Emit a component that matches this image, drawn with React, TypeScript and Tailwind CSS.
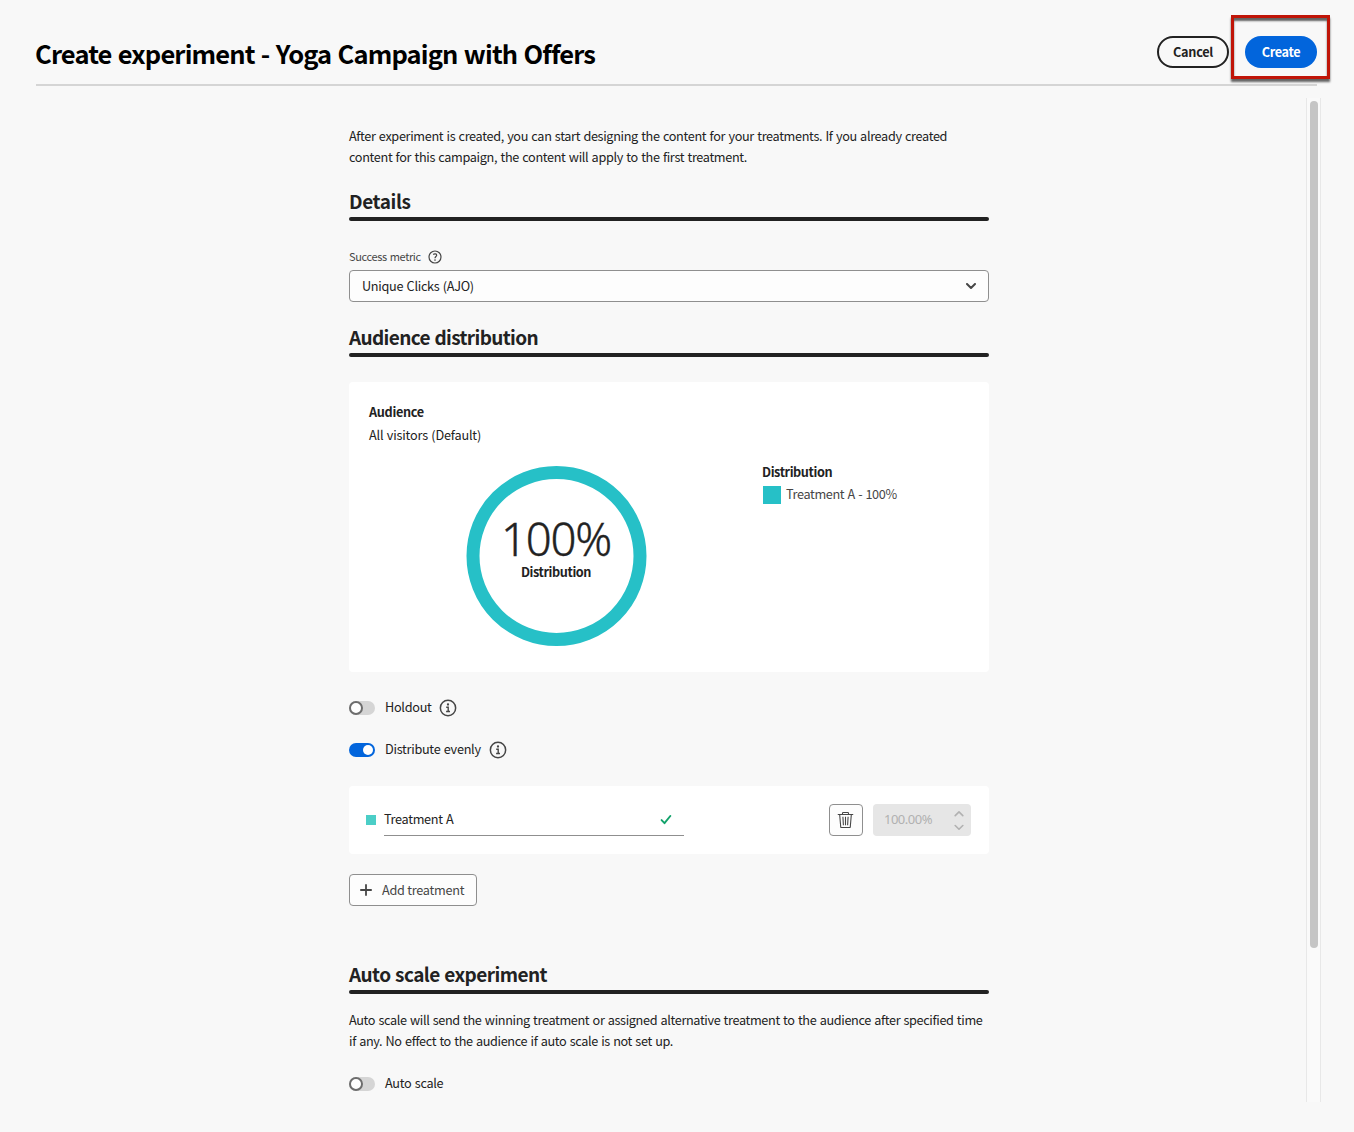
import type { ReactNode } from "react";

function SectionHeading({ children, className }: { children: ReactNode; className: string }) {
  return (
    <div className={className}>
      <h2 className="h-[29px] text-[19px] leading-[25px] font-bold whitespace-nowrap">{children}</h2>
      <div className="h-1 rounded-full bg-[#222]" />
    </div>
  );
}

function Toggle({ on = false }: { on?: boolean }) {
  return on ? (
    <span className="flex h-3.5 w-[26px] items-center justify-end rounded-full bg-[#0265dc] p-0.5">
      <span className="h-2.5 w-2.5 rounded-full bg-white" />
    </span>
  ) : (
    <span className="flex h-3.5 w-[26px] rounded-full bg-[#d5d5d5]">
      <span className="h-3.5 w-3.5 rounded-full border-2 border-[#6d6d6d] bg-white" />
    </span>
  );
}

function InfoIcon() {
  return (
    <svg width="18" height="18" viewBox="0 0 18 18" className="ml-2" fill="none" stroke="#464646">
      <circle cx="9" cy="9" r="7.65" strokeWidth="1.5" />
      <circle cx="9" cy="5.5" r="1.15" fill="#464646" stroke="none" />
      <path d="M7.2 8.3H9.2V12.4M7.1 12.5H11" strokeWidth="1.4" />
    </svg>
  );
}

function HelpIcon() {
  return (
    <svg width="14" height="14" viewBox="0 0 14 14" className="ml-[7px]" fill="none" stroke="#464646">
      <circle cx="7" cy="7" r="6" strokeWidth="1.2" />
      <path d="M5.2 4.5C6.3 3.5 8.8 3.6 8.7 5.3C8.6 6.5 7 6.7 7 8.2" strokeWidth="1.2" />
      <circle cx="7" cy="10.1" r="0.8" fill="#464646" stroke="none" />
    </svg>
  );
}

function TrashIcon() {
  return (
    <svg width="18" height="18" viewBox="0 0 18 18" className="-translate-x-[0.5px]" fill="none" stroke="#464646" strokeWidth="1.1">
      <path d="M1.7 3.5H16.3" strokeLinecap="round" />
      <path d="M6 3.5V2.2Q6 1.5 6.7 1.5H11.3Q12 1.5 12 2.2V3.5" />
      <path d="M3.2 3.8L4.2 15.8Q4.3 16.5 5 16.5H13Q13.7 16.5 13.8 15.8L14.8 3.8" />
      <path d="M9 5.8V14.2M6.4 5.8L6.9 14.2M11.6 5.8L11.1 14.2" />
    </svg>
  );
}

export default function App() {
  return (
    <div className="flex h-[1132px] w-[1354px] flex-col overflow-hidden bg-[#f8f8f8] pt-9 pl-9 font-['Noto_Sans_CJK_SC','Noto_Sans',sans-serif] text-[12.7px] tracking-[-0.345px] text-[#222] [word-spacing:0.8px]">
      <header className="flex h-[50px] w-[1281px] shrink-0 justify-between border-b-2 border-[#d5d5d5]">
        <h1 className="-ml-px text-[25.5px] leading-[34px] font-bold tracking-[-0.85px] whitespace-nowrap text-black [word-spacing:1.3px]">
          Create experiment - Yoga Campaign with Offers
        </h1>
        <div className="flex gap-4">
          <button className="h-8 w-[72px] rounded-full border-2 border-[#222] leading-[26px] font-bold tracking-[-0.3px]">
            Cancel
          </button>
          <div className="relative">
            <button className="h-8 w-[72px] rounded-full bg-[#0265dc] leading-[30px] font-bold tracking-[-0.35px] text-white">
              Create
            </button>
            <div className="absolute -top-[21px] -left-[14px] h-[64px] w-[99px] border-3 border-[#c01508] shadow-[0_3px_2px_rgba(0,0,0,0.6),inset_0_3px_2px_rgba(0,0,0,0.6)]" />
          </div>
        </div>
      </header>

      <div className="flex flex-1">
        <main className="flex w-[1270px] justify-center">
          <div className="w-[640px] -translate-x-[2px] pt-[39px]">
            <p className="leading-[21px] whitespace-nowrap">
              After experiment is created, you can start designing the content for your treatments. If you already created
              <br />
              content for this campaign, the content will apply to the first treatment.
            </p>

            <SectionHeading className="mt-[21px] tracking-[-0.4px]">Details</SectionHeading>
            <div className="mt-[25px] flex h-[22px] items-center">
              <span className="pb-0.5 text-[11px] leading-[20px] tracking-[-0.36px] text-[#464646]">Success metric</span>
              <HelpIcon />
            </div>
            <div className="mt-0.5 flex h-8 items-center justify-between rounded border border-[#8f8f8f] bg-[#fdfdfd] px-3">
              <span className="leading-5 tracking-[-0.29px]">Unique Clicks (AJO)</span>
              <svg width="10" height="7" viewBox="0 0 10 7" fill="none" stroke="#464646" strokeWidth="2" strokeLinecap="round" strokeLinejoin="round">
                <path d="M1 1L5 5L9 1" />
              </svg>
            </div>

            <SectionHeading className="mt-[22px] tracking-[-0.63px]">Audience distribution</SectionHeading>
            <section className="mt-[25px] flex h-[290px] flex-col rounded bg-white px-5 pt-[18px]">
              <h3 className="leading-[23px] font-bold tracking-[-0.31px]">Audience</h3>
              <p className="leading-[23px] tracking-[-0.19px]">All visitors (Default)</p>
              <div className="mt-5 flex">
                <div className="ml-[97.5px] flex h-[180px] w-[180px] -translate-x-[0.5px] flex-col items-center rounded-full border-[13.5px] border-[#26c0c7]">
                  <span className="mt-[33px] font-['Noto_Sans',sans-serif] text-[45.5px] leading-[52px] font-light tracking-[-1.2px] [-webkit-text-stroke:0.4px_#222]">
                    100%
                  </span>
                  <span className="leading-[16px] font-bold tracking-[-0.42px]">Distribution</span>
                </div>
                <div className="ml-[115.5px] -mt-[5px]">
                  <h3 className="h-[23px] leading-[21px] font-bold tracking-[-0.42px]">Distribution</h3>
                  <div className="flex items-center pl-px">
                    <span className="h-[18px] w-[18px] bg-[#26c0c7]" />
                    <span className="ml-[5px] pb-0.5 leading-[20px] tracking-[-0.37px] text-[#464646]">Treatment A - 100%</span>
                  </div>
                </div>
              </div>
            </section>

            <div className="mt-5 flex h-8 items-center">
              <Toggle />
              <span className="ml-2.5 w-[46px] pb-0.5 leading-[30px] tracking-[-0.28px] whitespace-nowrap">Holdout</span>
              <InfoIcon />
            </div>
            <div className="mt-2.5 flex h-8 items-center">
              <Toggle on />
              <span className="ml-2.5 w-24 pb-0.5 leading-[30px] tracking-[-0.28px] whitespace-nowrap">Distribute evenly</span>
              <InfoIcon />
            </div>

            <section className="mt-5 flex h-[68px] items-center rounded bg-white pr-[18px] pl-[17px]">
              <span className="h-2.5 w-2.5 bg-[#4bcec7]" />
              <div className="ml-2 flex h-8 w-[300px] items-center justify-between border-b border-[#8f8f8f] pr-3">
                <span className="pb-0.5 leading-[20px] tracking-[-0.32px]">Treatment A</span>
                <svg width="12" height="10" viewBox="0 0 12 10" fill="none" stroke="#12a26b" strokeWidth="1.9" strokeLinecap="round" strokeLinejoin="round">
                  <path d="M1.6 5.1L4.5 8.2L10.3 1" />
                </svg>
              </div>
              <button className="ml-auto flex h-8 w-[34px] items-center justify-center rounded border border-[#8f8f8f] bg-[#fdfdfd]">
                <TrashIcon />
              </button>
              <div className="ml-2.5 flex h-8 w-[98px] items-center justify-between rounded bg-[#e6e6e6] pr-[7px] pl-[11px] text-[#b1b1b1]">
                <span className="font-['Noto_Sans',sans-serif] text-[13px] tracking-[-0.5px]">100.00%</span>
                <svg width="10" height="20" viewBox="0 0 10 20" fill="none" stroke="currentColor" strokeWidth="1.6" strokeLinecap="round" strokeLinejoin="round">
                  <path d="M1.2 5.6L5 1.9L8.8 5.6M1.2 15.5L5 19.2L8.8 15.5" />
                </svg>
              </div>
            </section>

            <button className="mt-5 flex h-8 w-32 items-center rounded border border-[#8f8f8f] bg-[#fdfdfd] pl-2.5 text-[#464646]">
              <svg width="12" height="12" viewBox="0 0 12 12" stroke="currentColor" strokeWidth="1.8" strokeLinecap="round">
                <path d="M6 0.9V11.1M0.9 6H11.1" />
              </svg>
              <span className="ml-2.5 leading-5 tracking-[-0.27px]">Add treatment</span>
            </button>

            <SectionHeading className="mt-[55px] tracking-[-0.56px]">Auto scale experiment</SectionHeading>
            <p className="mt-[15px] leading-[21px] tracking-[-0.36px] whitespace-nowrap">
              Auto scale will send the winning treatment or assigned alternative treatment to the audience after specified time
              <br />
              if any. No effect to the audience if auto scale is not set up.
            </p>
            <div className="mt-[17px] flex h-8 items-center">
              <Toggle />
              <span className="ml-2.5 pb-0.5 leading-[30px] tracking-[-0.3px]">Auto scale</span>
            </div>
          </div>
        </main>

        <div className="mt-3 h-[1004px] w-[15px] border-x border-[#e8e8e8] bg-[#fafafa] pt-[3px]">
          <div className="ml-[3px] h-[847px] w-2 rounded-full bg-[#c5c5c5]" />
        </div>
      </div>
    </div>
  );
}
